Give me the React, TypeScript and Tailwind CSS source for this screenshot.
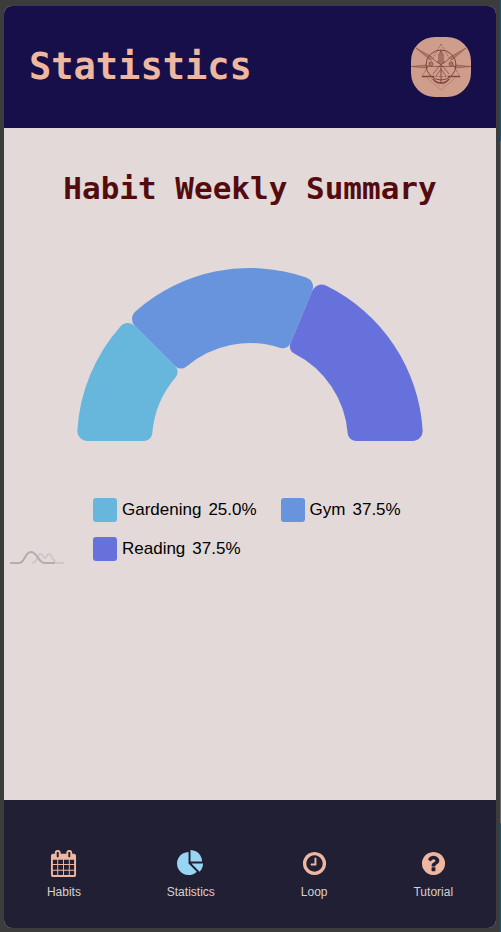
import React from "react";

const CX = 173;
const CY = 173;
const OUTER = 173;
const INNER = 98;
const OUTER_CORNER = 10;
const INNER_CORNER = 8;

function point(radius: number, angle: number) {
  return `${(CX + radius * Math.cos(angle)).toFixed(2)} ${(CY - radius * Math.sin(angle)).toFixed(2)}`;
}

// Ring segment from one angle to a smaller one (degrees), with rounded corners.
function segment(fromDeg: number, toDeg: number) {
  const a = (fromDeg * Math.PI) / 180;
  const b = (toDeg * Math.PI) / 180;
  const outerTurn = Math.asin(OUTER_CORNER / (OUTER - OUTER_CORNER));
  const innerTurn = Math.asin(INNER_CORNER / (INNER + INNER_CORNER));
  const outerEdge = Math.sqrt((OUTER - OUTER_CORNER) ** 2 - OUTER_CORNER ** 2);
  const innerEdge = Math.sqrt((INNER + INNER_CORNER) ** 2 - INNER_CORNER ** 2);
  const oc = `A ${OUTER_CORNER} ${OUTER_CORNER} 0 0 1`;
  const ic = `A ${INNER_CORNER} ${INNER_CORNER} 0 0 1`;
  return [
    `M ${point(outerEdge, a)}`,
    `${oc} ${point(OUTER, a - outerTurn)}`,
    `A ${OUTER} ${OUTER} 0 0 1 ${point(OUTER, b + outerTurn)}`,
    `${oc} ${point(outerEdge, b)}`,
    `L ${point(innerEdge, b)}`,
    `${ic} ${point(INNER, b + innerTurn)}`,
    `A ${INNER} ${INNER} 0 0 0 ${point(INNER, a - innerTurn)}`,
    `${ic} ${point(innerEdge, a)}`,
    "Z",
  ].join(" ");
}

const habits = [
  { name: "Gardening", share: "25.0%", color: "#67b7dc", from: 180, to: 135 },
  { name: "Gym", share: "37.5%", color: "#6794dc", from: 135, to: 67.5 },
  { name: "Reading", share: "37.5%", color: "#6771dc", from: 67.5, to: 0 },
];

const disc =
  "m384 192q0 209-103 385.5t-279.5 279.5-385.5 103-385.5-103-279.5-279.5-103-385.5 103-385.5 279.5-279.5 385.5-103 385.5 103 279.5 279.5 103 385.5z";

const tabs = [
  {
    label: "Habits",
    active: false,
    path: "M192 1664h288v-288h-288v288zm352 0h320v-288h-320v288zm-352-352h288v-320h-288v320zm352 0h320v-320h-320v320zm-352-384h288v-288h-288v288zm736 736h320v-288h-320v288zm-384-736h320v-288h-320v288zm768 736h288v-288h-288v288zm-384-352h320v-320h-320v320zm-352-864v-288q0-13-9.5-22.5t-22.5-9.5h-64q-13 0-22.5 9.5t-9.5 22.5v288q0 13 9.5 22.5t22.5 9.5h64q13 0 22.5-9.5t9.5-22.5zm736 864h288v-320h-288v320zm-384-384h320v-288h-320v288zm384 0h288v-288h-288v288zm32-480v-288q0-13-9.5-22.5t-22.5-9.5h-64q-13 0-22.5 9.5t-9.5 22.5v288q0 13 9.5 22.5t22.5 9.5h64q13 0 22.5-9.5t9.5-22.5zm384-64v1280q0 52-38 90t-90 38h-1408q-52 0-90-38t-38-90v-1280q0-52 38-90t90-38h128v-96q0-66 47-113t113-47h64q66 0 113 47t47 113v96h384v-96q0-66 47-113t113-47h64q66 0 113 47t47 113v96h128q52 0 90 38t38 90z",
  },
  {
    label: "Statistics",
    active: true,
    path: "M768 890l546 546q-106 108-247.5 168t-298.5 60q-209 0-385.5-103t-279.5-279.5-103-385.5 103-385.5 279.5-279.5 385.5-103v762zm187 6h773q0 157-60 298.5t-168 247.5zm709-128h-768v-768q209 0 385.5 103t279.5 279.5 103 385.5z",
  },
  {
    label: "Loop",
    active: false,
    path: "M1024 544v448q0 14-9 23t-23 9h-320q-14 0-23-9t-9-23v-64q0-14 9-23t23-9h224v-352q0-14 9-23t23-9h64q14 0 23 9t9 23zm416 352q0-148-73-273t-198-198-273-73-273 73-198 198-73 273 73 273 198 198 273 73 273-73 198-198 73-273zm224 0q0 209-103 385.5t-279.5 279.5-385.5 103-385.5-103-279.5-279.5-103-385.5 103-385.5 279.5-279.5 385.5-103 385.5 103 279.5 279.5 103 385.5z",
  },
  {
    label: "Tutorial",
    active: false,
    path:
      "M1024 1376v-192q0-14-9-23t-23-9h-192q-14 0-23 9t-9 23v192q0 14 9 23t23 9h192q14 0 23-9t9-23zm256-672q0-88-55.5-163t-138.5-116-170-41q-243 0-371 213-15 24 8 42l132 100q7 6 19 6 16 0 25-12 53-68 86-92 34-24 86-24 48 0 85.5 26t37.5 59q0 38-20 61t-68 45q-63 28-115.5 86.5t-52.5 125.5v36q0 14 9 23t23 9h192q14 0 23-9t9-23q0-19 21.5-49.5t54.5-49.5q32-18 49-28.5t46-35 44.5-48 28-60.5 12.5-81z" +
      disc,
  },
];

function Emblem() {
  return (
    <svg viewBox="0 0 60 60" className="size-[60px]" fill="none" stroke="#7f4640" strokeWidth="0.7" aria-hidden="true">
      <circle cx="30" cy="28" r="15" strokeWidth="1" />
      <path d="M30 7 11 39.500H49Z" strokeWidth="0.6" strokeDasharray="2 1" />
      <path d="M5 11 21 20 19 23ZM55 11 39 20 41 23ZM0 29.500 16 28V31ZM60 29.500 44 28V31Z" fill="#7f4640" fillOpacity="0.4" strokeWidth="0.5" />
      <path d="M21 21 27 26M39 21 33 26M16 29.500H44" strokeWidth="0.7" />
      <path d="M30 13V47" strokeWidth="1" />
      <path d="M28 17V27M32 17V27" strokeWidth="1" />
      <path d="M28 17 30 14 32 17M26 24 30 28 34 24M22 37 30 27 38 37M25 39 30 32 35 39" />
      <circle cx="20" cy="27" r="2" fill="#7f4640" fillOpacity="0.4" />
      <circle cx="40" cy="27" r="2" fill="#7f4640" fillOpacity="0.4" />
      <path d="M22 42Q25 46 30 46T38 42" strokeWidth="1.300" />
      <path d="M11 39.500H23M37 39.500H49" strokeWidth="1.300" />
      <path d="M16 41 30 53 44 41M20 41 29 49M40 41 31 49" strokeWidth="0.6" opacity="0.5" />
    </svg>
  );
}

export default function App() {
  return (
    <div className="flex min-h-screen bg-[#3c3c3c] font-['Liberation_Sans',Arial,sans-serif]">
      <div className="flex flex-1 flex-col px-1 pt-1.5 pb-1">
        <div className="flex flex-1 flex-col overflow-hidden rounded-lg bg-[#e2d9d8]">
          <header className="flex items-center justify-between bg-[#170f49] px-[25px] py-[31px]">
            <h1 className="font-['DejaVu_Sans_Mono',monospace] text-[37px] leading-[60px] font-bold text-[#efb7a0]">Statistics</h1>
            <button type="button" aria-label="Profile" className="overflow-hidden rounded-3xl bg-[#cf9d8b]">
              <Emblem />
            </button>
          </header>

          <main className="flex-1">
            <h2 className="pt-10 text-center font-['DejaVu_Sans_Mono',monospace] text-[31px] leading-10 font-bold whitespace-nowrap text-[#550b0e]">
              Habit Weekly Summary
            </h2>
            <section className="relative flex flex-col items-center pt-[60px]">
              <svg viewBox="0 0 346 174" className="w-[346px]" role="img" aria-label="Habit share by week">
                {habits.map((habit) => (
                  <path key={habit.name} d={segment(habit.from, habit.to)} fill={habit.color} />
                ))}
              </svg>
              <ul className="mt-14 flex w-[314px] flex-wrap gap-x-6 gap-y-[15px] text-[17px] leading-6 text-black">
                {habits.map((habit) => (
                  <li key={habit.name} className="flex items-center gap-[5px]">
                    <span className="size-6 rounded-[3px]" style={{ backgroundColor: habit.color }} />
                    <span>{habit.name}</span>
                    <span className="ml-0.5">{habit.share}</span>
                  </li>
                ))}
              </ul>
              <svg viewBox="0 0 54 14" className="absolute -bottom-[3px] left-1.5 w-[54px]" fill="none" strokeWidth="2" aria-hidden="true">
                <path d="M22 13C28 13 27 4 30.500 4S33 8 35 8 36 4 39 4 43 13 48 13H54" stroke="#d0c7c8" />
                <path d="M0 13H9C15 13 14.500 2 21 2S28 13 35 13H45" stroke="#b5acad" />
              </svg>
            </section>
          </main>

          <nav className="flex h-32 items-center justify-around bg-[#211f33] pt-[21px]">
            {tabs.map((tab) => (
              <a key={tab.label} href="#" aria-current={tab.active ? "page" : undefined} className="flex flex-col items-center gap-[7px]">
                <svg viewBox="0 0 1792 1792" className={tab.active ? "size-[27px] text-[#98d5f3]" : "size-[27px] text-[#efb7a0]"} fill="currentColor" aria-hidden="true">
                  <path d={tab.path} />
                </svg>
                <span className="text-xs text-[#d9d0cf]">{tab.label}</span>
              </a>
            ))}
          </nav>
        </div>
      </div>
      <div className="flex w-px flex-col" aria-hidden="true">
        <div className="h-[141px] bg-[#1d5670]" />
        <div className="flex-1 bg-[#6b6b6b]" />
        <div className="h-[109px] bg-[#1d5670]" />
      </div>
    </div>
  );
}
